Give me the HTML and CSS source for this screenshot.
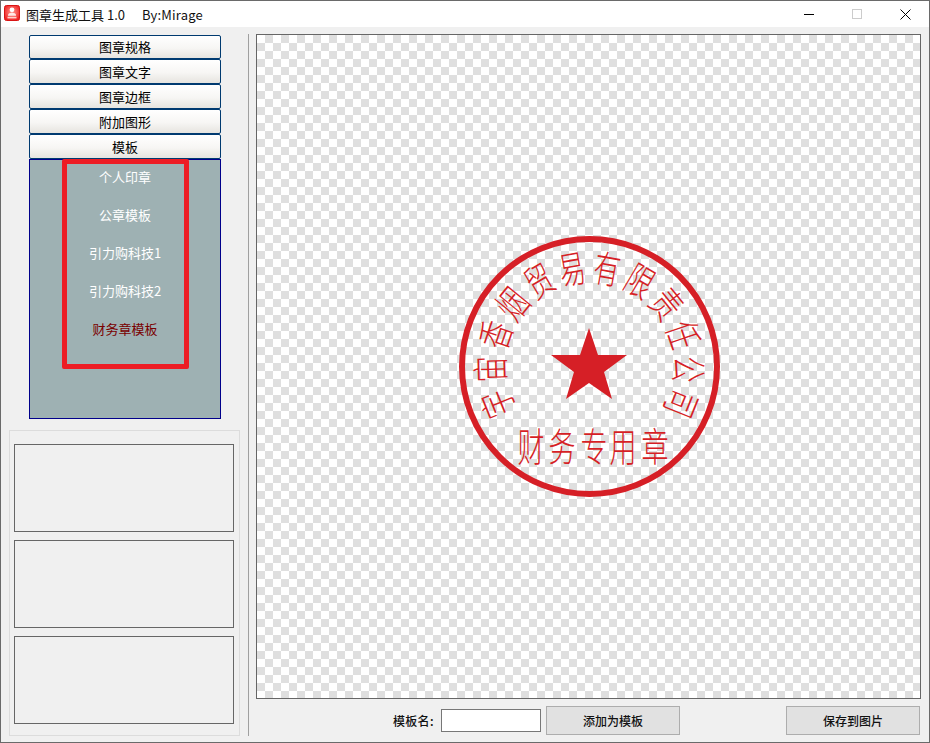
FILE: index.html
```html
<!DOCTYPE html>
<html lang="zh-CN">
<head>
<meta charset="utf-8">
<title>图章生成工具</title>
<link rel="stylesheet" href="styles.css">
</head>
<body>
<div class="window">
  <header class="titlebar">
    <svg class="app-icon" width="16" height="16" viewBox="0 0 16 16">
      <defs>
        <radialGradient id="iconGlow" cx=".5" cy=".45" r=".6">
          <stop offset="0" stop-color="#ff9a90"/>
          <stop offset="1" stop-color="#f02020"/>
        </radialGradient>
      </defs>
      <rect x=".5" y=".5" width="15" height="15" rx="2" fill="url(#iconGlow)" stroke="#d81414"/>
      <circle cx="8" cy="4.8" r="2.4" fill="#fff"/>
      <path d="M4 10.2C4 8.6 6 7.8 8 7.8S12 8.6 12 10.2V10.8H4Z" fill="#ffe9e6"/>
      <rect x="3.5" y="11.8" width="9" height="1.6" fill="#ffd2cc"/>
    </svg>
    <span class="app-title">图章生成工具 1.0</span>
    <span class="app-author">By:Mirage</span>
    <div class="win-controls">
      <svg class="win-btn" width="10" height="10" viewBox="0 0 10 10"><path d="M0 5.5H10" stroke="#000" fill="none"/></svg>
      <svg class="win-btn" width="10" height="10" viewBox="0 0 10 10"><rect x=".5" y=".5" width="9" height="9" stroke="#ccc" fill="none"/></svg>
      <svg class="win-btn" width="11" height="11" viewBox="0 0 11 11"><path d="M.5 .5L10.5 10.5M10.5 .5L.5 10.5" stroke="#000" fill="none"/></svg>
    </div>
  </header>
  <div class="main">
    <aside class="sidebar">
      <div class="accordion">
        <button class="acc-btn">图章规格</button>
        <button class="acc-btn">图章文字</button>
        <button class="acc-btn">图章边框</button>
        <button class="acc-btn">附加图形</button>
        <button class="acc-btn">模板</button>
        <div class="acc-panel">
          <div class="tpl">个人印章</div>
          <div class="tpl">公章模板</div>
          <div class="tpl">引力购科技1</div>
          <div class="tpl">引力购科技2</div>
          <div class="tpl tpl-active">财务章模板</div>
          <div class="highlight"></div>
        </div>
      </div>
      <div class="group">
        <div class="slot"></div>
        <div class="slot"></div>
        <div class="slot"></div>
      </div>
    </aside>
    <div class="divider"></div>
    <section class="workspace">
      <div class="canvas">
        <svg class="stamp" width="663" height="663" viewBox="257 35 663 663">
          <circle cx="589.5" cy="366.5" r="127.5" fill="none" stroke="#d61f26" stroke-width="6"/>
          <polygon points="589,328 598,355 627,355 604,372 612,399 589,383 566,399 574,372 551,355 580,355" fill="#d61f26"/>
          <g class="stamp-text">
            <text transform="translate(589.5 366.5) rotate(-112) translate(0 -85) scale(.8 1.14)">宇</text>
            <text transform="translate(589.5 366.5) rotate(-91.6) translate(0 -85) scale(.8 1.14)">宙</text>
            <text transform="translate(589.5 366.5) rotate(-71.3) translate(0 -85) scale(.8 1.14)">香</text>
            <text transform="translate(589.5 366.5) rotate(-50.9) translate(0 -85) scale(.8 1.14)">烟</text>
            <text transform="translate(589.5 366.5) rotate(-30.5) translate(0 -85) scale(.8 1.14)">贸</text>
            <text transform="translate(589.5 366.5) rotate(-10.2) translate(0 -85) scale(.8 1.14)">易</text>
            <text transform="translate(589.5 366.5) rotate(10.2) translate(0 -85) scale(.8 1.14)">有</text>
            <text transform="translate(589.5 366.5) rotate(30.5) translate(0 -85) scale(.8 1.14)">限</text>
            <text transform="translate(589.5 366.5) rotate(50.9) translate(0 -85) scale(.8 1.14)">责</text>
            <text transform="translate(589.5 366.5) rotate(71.3) translate(0 -85) scale(.8 1.14)">任</text>
            <text transform="translate(589.5 366.5) rotate(91.6) translate(0 -85) scale(.8 1.14)">公</text>
            <text transform="translate(589.5 366.5) rotate(112) translate(0 -85) scale(.8 1.14)">司</text>
            <text transform="translate(531 461) scale(.82 1.18)">财</text>
            <text transform="translate(562 461) scale(.82 1.18)">务</text>
            <text transform="translate(594 461) scale(.82 1.18)">专</text>
            <text transform="translate(623 461) scale(.82 1.18)">用</text>
            <text transform="translate(655 461) scale(.82 1.18)">章</text>
          </g>
        </svg>
      </div>
      <div class="controls">
        <label class="tpl-label">模板名:</label>
        <input class="tpl-input" type="text">
        <button class="action">添加为模板</button>
        <button class="action action-save">保存到图片</button>
      </div>
    </section>
  </div>
</div>
</body>
</html>
```

FILE: styles.css
```css
* { box-sizing: border-box; }
html, body { margin: 0; padding: 0; }
body {
  width: 930px;
  height: 743px;
  overflow: hidden;
  font-family: "Noto Sans CJK SC", "Liberation Sans", sans-serif;
  font-size: 13px;
  color: #000;
}
.window {
  width: 930px;
  height: 743px;
  display: flex;
  flex-direction: column;
  background: #f0f0f0;
  border: 1px solid #6a6a6a;
}
.titlebar {
  height: 26px;
  flex: none;
  display: flex;
  align-items: center;
  background: #fff;
  padding-left: 3px;
  font-size: 13px;
  color: #111;
}
.app-icon { flex: none; margin: -2px 6px 0 0; }
.app-author { margin-left: 17px; letter-spacing: .2px; }
.win-controls { margin-left: auto; display: flex; align-items: center; }
.win-btn { flex: none; display: block; }
.win-btn:nth-child(1) { margin-right: 38px; }
.win-btn:nth-child(2) { margin-right: 38px; }
.win-btn:nth-child(3) { margin-right: 18px; }
.main { flex: 1; display: flex; min-height: 0; }
.sidebar {
  width: 247px;
  flex: none;
  padding: 8px 0 0 8px;
  display: flex;
  flex-direction: column;
}
.accordion { width: 192px; margin-left: 20px; display: flex; flex-direction: column; }
.acc-btn {
  height: 25px;
  padding: 0;
  border: 1px solid #003a70;
  border-radius: 2px;
  background: linear-gradient(#ffffff, #f7f6f4 55%, #e6e4df);
  font: inherit;
  font-size: 13px;
  color: #000;
  line-height: 22px;
}
.acc-btn:first-child { height: 24px; }
.acc-panel {
  position: relative;
  height: 260px;
  padding: 0;
  border: 1px solid #00008b;
  background: #9eb1b3;
  display: flex;
  flex-direction: column;
  gap: 4px;
}
.tpl {
  height: 34px;
  flex: none;
  line-height: 34px;
  text-align: center;
  color: #fff;
}
.tpl-active { color: #7a0000; }
.highlight {
  position: absolute;
  left: 32px;
  top: -1px;
  width: 127px;
  height: 210px;
  border: 5px solid #ed1c24;
  border-radius: 2px;
}
.group {
  width: 231px;
  height: 306px;
  margin-top: 11px;
  padding: 13px 4px 0;
  border: 1px solid #dcdcdc;
  display: flex;
  flex-direction: column;
  gap: 8px;
}
.slot { width: 220px; height: 88px; flex: none; border: 1px solid #666; }
.divider {
  width: 1px;
  flex: none;
  margin: 7px 0 6px;
  background: #a0a0a0;
}
.workspace { flex: 1; padding: 7px 0 0 7px; min-width: 0; }
.canvas {
  width: 665px;
  height: 665px;
  border: 1px solid #666;
  background: repeating-conic-gradient(#dfdfdf 0 25%, #fff 0 50%) 0 0 / 16px 16px;
}
.stamp { display: block; }
.stamp-text text {
  font-family: "Noto Sans CJK SC", sans-serif;
  font-weight: 300;
  font-size: 33px;
  fill: #d61f26;
  text-anchor: middle;
}
.controls {
  margin-top: 7px;
  height: 29px;
  display: flex;
  align-items: center;
  padding-left: 137px;
  width: 664px;
}
.tpl-label { font-size: 12px; font-weight: 500; letter-spacing: .3px; width: 48px; flex: none; color: #111; }
.tpl-input {
  width: 100px;
  height: 23px;
  flex: none;
  margin: 0 5px 0 0;
  padding: 0;
  border: 1px solid #777;
  background: #fff;
}
.action {
  width: 134px;
  height: 29px;
  flex: none;
  padding: 0;
  border: 1px solid #adadad;
  background: #e1e1e1;
  font: inherit;
  font-size: 12px;
  font-weight: 500;
  color: #111;
}
.action-save { margin-left: auto; }
```
